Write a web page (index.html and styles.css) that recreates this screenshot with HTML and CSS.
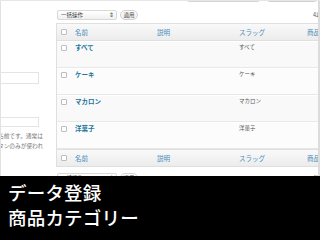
FILE: index.html
```html
<!DOCTYPE html>
<html lang="ja">
<head>
<meta charset="utf-8">
<link rel="stylesheet" href="styles.css">
</head>
<body>
<div class="screen">
  <div class="side">
    <div class="side-input first"></div>
    <div class="side-input second"></div>
    <p class="side-note">名前です。通常は<br>タンのみが使われ</p>
  </div>
  <div class="main">
    <div class="top-edges">
      <span class="edge-search"></span>
      <span class="edge-btn"></span>
    </div>
    <div class="nav">
      <div class="select">一括操作<span class="arrows">⇕</span></div>
      <div class="btn">適用</div>
      <div class="count-items">4項目</div>
    </div>
    <div class="table">
      <div class="row head">
        <span class="cb"></span><span class="col">名前</span><span class="col">説明</span><span class="col">スラッグ</span><span class="col">商品</span>
      </div>
      <div class="row item alt">
        <span class="cb"></span><span class="name">すべて</span><span></span><span class="slug">すべて</span><span class="num">3</span>
      </div>
      <div class="row item">
        <span class="cb"></span><span class="name">ケーキ</span><span></span><span class="slug">ケーキ</span><span class="num">3</span>
      </div>
      <div class="row item alt">
        <span class="cb"></span><span class="name">マカロン</span><span></span><span class="slug">マカロン</span><span class="num">0</span>
      </div>
      <div class="row item">
        <span class="cb"></span><span class="name">洋菓子</span><span></span><span class="slug">洋菓子</span><span class="num">0</span>
      </div>
      <div class="row head">
        <span class="cb"></span><span class="col">名前</span><span class="col">説明</span><span class="col">スラッグ</span><span class="col">商品</span>
      </div>
    </div>
    <div class="nav bottom">
      <div class="select">一括操作<span class="arrows">⇕</span></div>
      <div class="btn">適用</div>
      <div class="count-items">4項目</div>
    </div>
  </div>
</div>
<div class="caption">
  <div>データ登録</div>
  <div>商品カテゴリー</div>
</div>
</body>
</html>
```

FILE: styles.css
```css
* { box-sizing: border-box; }
html, body { margin: 0; padding: 0; }
body {
  width: 320px;
  height: 240px;
  overflow: hidden;
  background: #fff;
  font-family: "Noto Sans CJK JP", "Liberation Sans", sans-serif;
}
.screen {
  display: flex;
  height: 176px;
  overflow: hidden;
  border-top: 1px solid #e6e6e6;
}
.side {
  width: 55px;
  flex: none;
  border-left: 1px solid #e2e2e2;
  padding-top: 71px;
  overflow: hidden;
}
.side-input {
  width: 38px;
  height: 12px;
  border: 1px solid #e4e4e4;
  border-left: none;
  background: #fff;
}
.side-input.second { margin-top: 33px; height: 10px; }
.side-note {
  margin: 4px 0 0 -3px;
  width: 60px;
  font-size: 5.7px;
  line-height: 9.5px;
  color: #777;
  white-space: nowrap;
}
.main {
  flex: 1;
  overflow: hidden;
  border-right: 2px solid #dcdcdc;
  background: #fff;
}
.top-edges { position: relative; height: 0; }
.edge-search {
  position: absolute; left: 132px; top: -4px; width: 73px; height: 5px;
  border: 1px solid #d6d6d6; border-radius: 2px;
}
.edge-btn {
  position: absolute; left: 212px; top: -4px; width: 50px; height: 5px;
  border: 1px solid #cfcfcf; border-radius: 3px;
}
.nav {
  display: flex;
  align-items: center;
  height: 12px;
  margin-top: 8px;
  padding-left: 2px;
}
.select {
  width: 60px;
  height: 10px;
  border: 1px solid #d8d8d8;
  border-radius: 2px;
  background: linear-gradient(#fff, #f0f0f0);
  font-size: 5.5px;
  line-height: 8px;
  padding-left: 3px;
  color: #333;
  position: relative;
}
.arrows {
  position: absolute;
  right: 2px;
  top: 0;
  font-size: 6px;
  color: #444;
}
.btn {
  margin-left: 3px;
  width: 18px;
  height: 10px;
  border: 1px solid #d2d2d2;
  border-radius: 5px;
  background: linear-gradient(#fff, #eee);
  font-size: 5.5px;
  line-height: 8px;
  text-align: center;
  color: #444;
}
.count-items {
  margin-left: auto;
  margin-right: -9px;
  font-size: 5.5px;
  color: #555;
}
.table {
  margin-top: 2px;
  margin-left: 1px;
  width: 275px;
  border: 1px solid #dfdfdf;
  border-right: none;
}
.row {
  display: grid;
  grid-template-columns: 18px 82px 82px 68px 30px;
  align-items: start;
}
.row.head {
  height: 17px;
  align-items: center;
  background: linear-gradient(#f9f9f9, #ececec);
  border-bottom: 1px solid #dfdfdf;
}
.row.head:last-child { border-bottom: none; border-top: 1px solid #dfdfdf; }
.row.item {
  height: 27px;
  padding-top: 1px;
  background: #fcfcfc;
  border-top: 1px solid #fff;
  border-bottom: 1px solid #e8e8e8;
}
.row.item.alt { background: #f9f9f9; }
.cb {
  width: 6px;
  height: 6px;
  margin-left: 4px;
  border: 1px solid #bdbdbd;
  border-radius: 1px;
  background: #fff;
}
.row.item .cb { margin-top: 2px; }
.col {
  font-size: 6.5px;
  color: #4a8dba;
}
.name {
  font-size: 6.5px;
  font-weight: bold;
  color: #21759b;
  line-height: 9px;
}
.slug {
  font-size: 5.5px;
  color: #555;
  line-height: 9px;
}
.num {
  font-size: 6.5px;
  color: #21759b;
  line-height: 9px;
  text-align: right;
  padding-right: 7px;
}
.nav.bottom { margin-top: 5px; }
.caption {
  height: 64px;
  background: #000;
  color: #fff;
  padding: 4px 0 0 8px;
  font-size: 18.5px;
  font-weight: 500;
  line-height: 25px;
  letter-spacing: 0.2px;
}
```
